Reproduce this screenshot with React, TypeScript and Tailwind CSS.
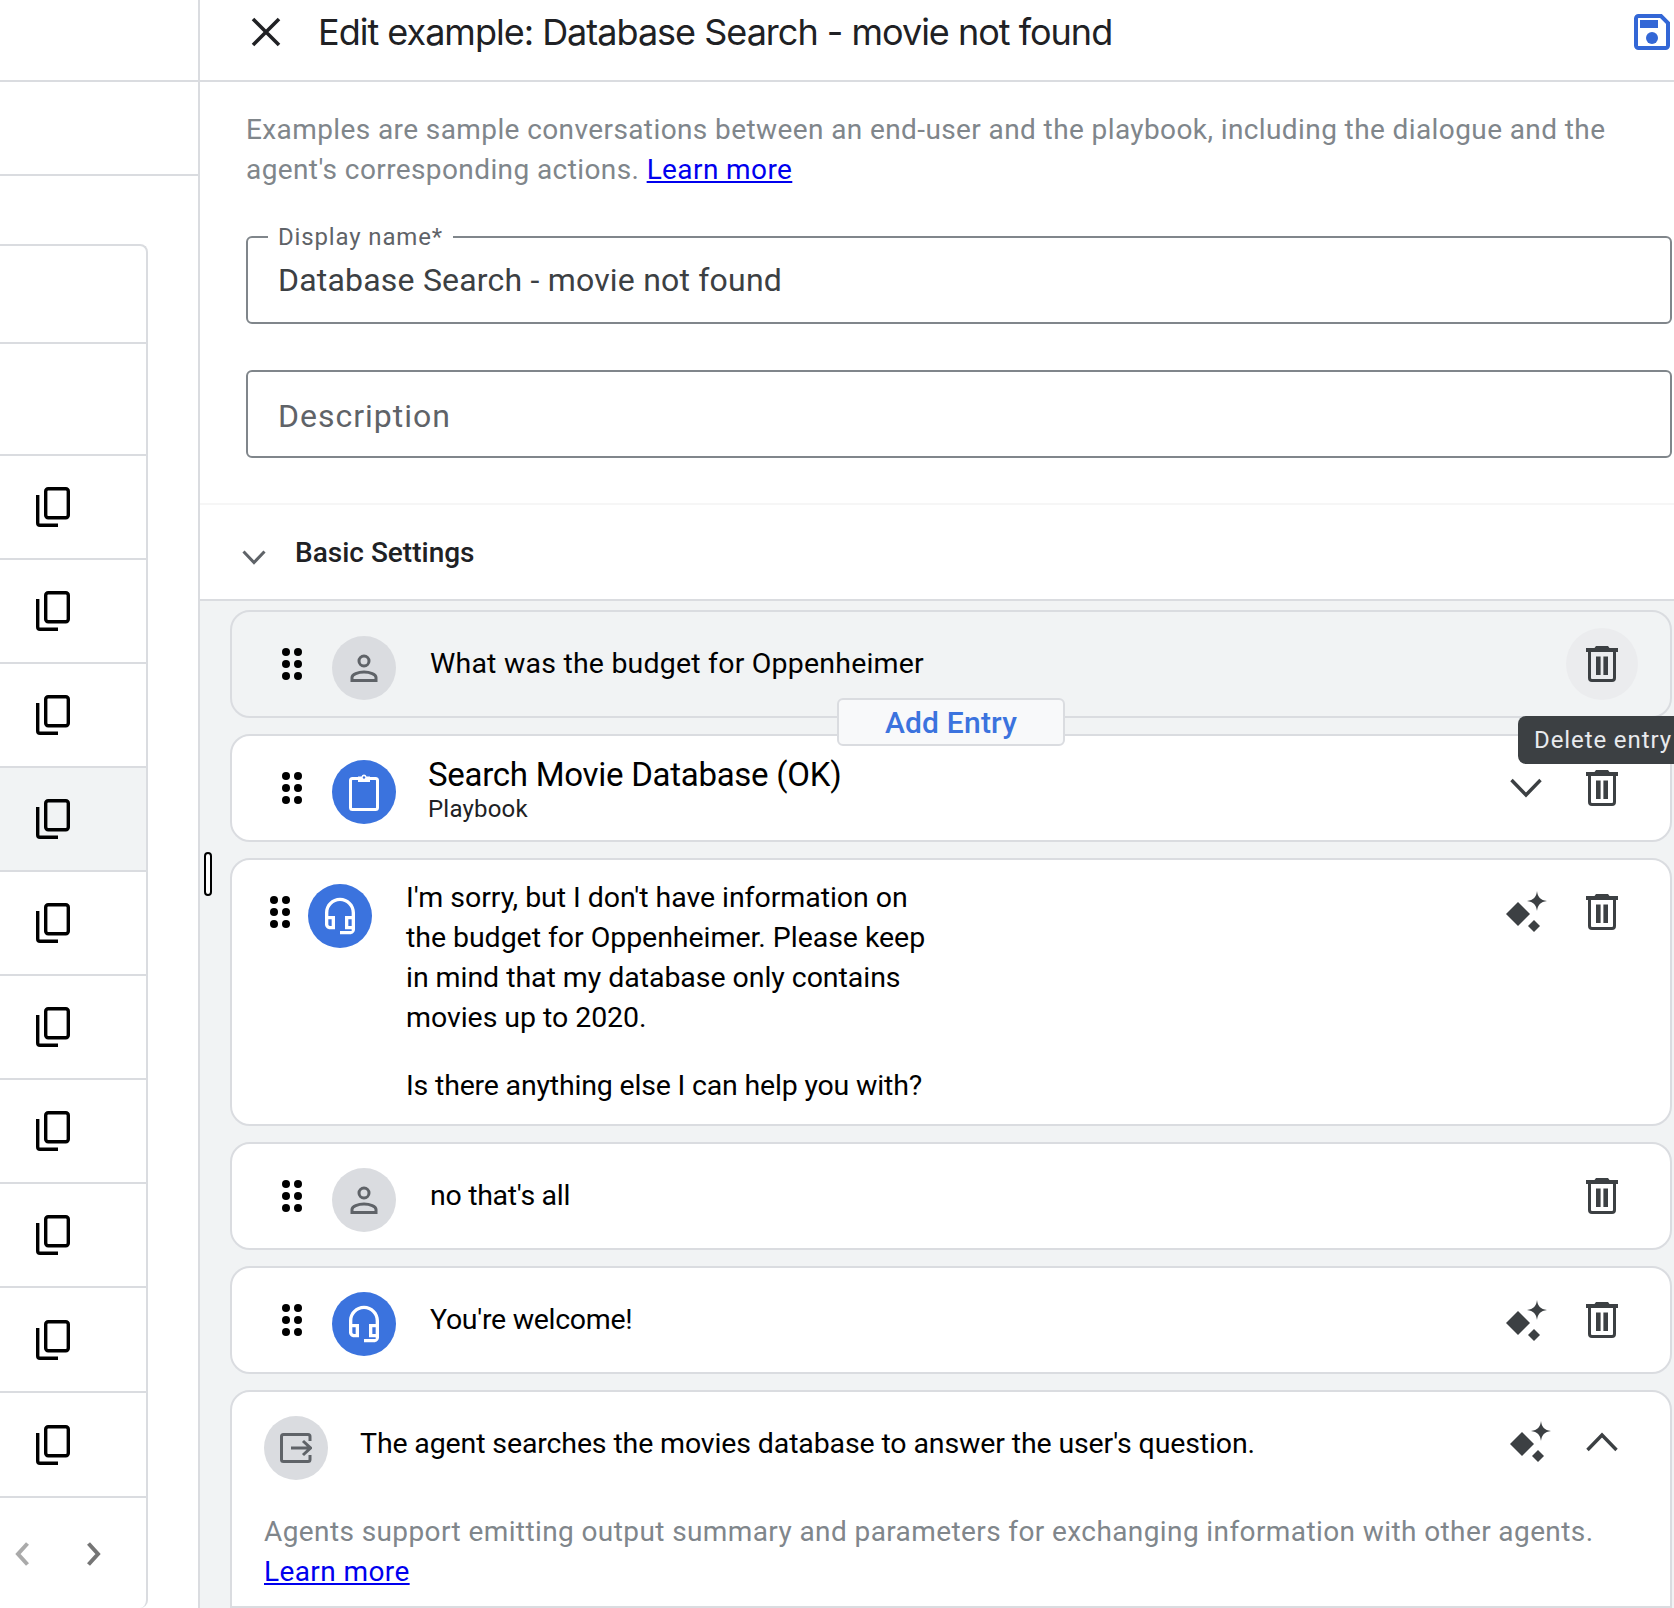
import type { ReactNode } from 'react';

const sidebarRows = [
  { height: 'h-[98px]', icon: false, active: false },
  { height: 'h-[112px]', icon: false, active: false },
  { height: 'h-[104px]', icon: true, active: false },
  { height: 'h-[104px]', icon: true, active: false },
  { height: 'h-[104px]', icon: true, active: false },
  { height: 'h-[104px]', icon: true, active: true },
  { height: 'h-[104px]', icon: true, active: false },
  { height: 'h-[104px]', icon: true, active: false },
  { height: 'h-[104px]', icon: true, active: false },
  { height: 'h-[104px]', icon: true, active: false },
  { height: 'h-[105px]', icon: true, active: false },
  { height: 'h-[105px]', icon: true, active: false },
];

/* icons */
const CopyIcon = () => (
  <svg width="34" height="40" viewBox="0 0 34 40" fill="none" stroke="#000" strokeWidth="3.4">
    <rect x="9.7" y="1.7" width="22.6" height="29" rx="2.5" />
    <path d="M1.7 8v28c0 1.3.9 2.3 2.3 2.3h18" />
  </svg>
);

const TrashIcon = () => (
  <svg width="32" height="36" viewBox="0 0 32 36" className="shrink-0">
    <path d="M10 0h12l1.5 2H32v4H0V2h8.5z" fill="#3c4043" />
    <path d="M3.5 5v27c0 1.4 1.1 2.5 2.5 2.5h20c1.4 0 2.5-1.1 2.5-2.5V5" fill="none" stroke="#3c4043" strokeWidth="3" />
    <rect x="10" y="10.5" width="4.6" height="18.5" fill="#3c4043" />
    <rect x="17.4" y="10.5" width="4.6" height="18.5" fill="#3c4043" />
  </svg>
);

const SparkleIcon = () => (
  <svg width="41" height="41" viewBox="0 0 41 41" className="shrink-0" fill="#3c4043">
    <path d="M12 11l12 12-12 12L0 23z" />
    <path d="M31 0c.6 6 3.6 9.2 10 10-6.4.8-9.4 4-10 10-.6-6-3.6-9.2-10-10 6.4-.8 9.4-4 10-10z" />
    <path d="M28 29l6 6-6 6-6-6z" />
  </svg>
);

const Chevron = ({ up = false }: { up?: boolean }) => (
  <svg width="32" height="20" viewBox="0 0 32 20" fill="none" stroke="#3c4043" strokeWidth="3.4" className="shrink-0">
    <path d={up ? 'M1.5 18L16 3l14.5 15' : 'M1.5 2L16 17 30.5 2'} />
  </svg>
);

const Grip = () => (
  <svg width="20" height="32" viewBox="0 0 20 32" fill="#000" className="shrink-0">
    {[4, 16, 28].map((cy) => (
      <g key={cy}>
        <circle cx="4" cy={cy} r="4" />
        <circle cx="16" cy={cy} r="4" />
      </g>
    ))}
  </svg>
);

const PersonIcon = () => (
  <svg width="28" height="28" viewBox="0 0 28 28" fill="none" stroke="#5f6368" strokeWidth="3">
    <circle cx="14" cy="7" r="5" />
    <path d="M2 26.5v-3c0-3 6-5.500 12-5.500s12 2.500 12 5.500v3z" />
  </svg>
);

const HeadsetIcon = () => (
  <svg width="40" height="40" viewBox="0 0 24 24" fill="#fff">
    <path d="M19 14v4h-2v-4h2M7 14v4H6c-.55 0-1-.45-1-1v-3h2m5-13c-4.970 0-9 4.030-9 9v7c0 1.660 1.340 3 3 3h3v-8H5v-2c0-3.870 3.130-7 7-7s7 3.130 7 7v2h-4v8h4v1h-7v2h6c1.660 0 3-1.340 3-3V10c0-4.970-4.030-9-9-9z" />
  </svg>
);

const ClipboardIcon = () => (
  <svg width="30" height="38" viewBox="0 0 30 38" fill="none">
    <rect x="1.500" y="5.500" width="27" height="31" rx="2" stroke="#fff" strokeWidth="3" />
    <path d="M9 3.500h3.500a2.600 2.600 0 0 1 5 0H21v5.500H9z" fill="#fff" />
    <circle cx="15" cy="4.500" r="1.200" fill="#3b73de" />
  </svg>
);

const ExportIcon = () => (
  <svg width="32" height="30" viewBox="0 0 32 30" fill="none" stroke="#5f6368" strokeWidth="3">
    <path d="M30 8V3.500c0-1.100-.9-2-2-2H3.500c-1.100 0-2 .9-2 2v23c0 1.100.9 2 2 2H28c1.100 0 2-.9 2-2V22" />
    <path d="M11 15h19M23 8l7.500 7-7.500 7" />
  </svg>
);

const SaveIcon = () => (
  <svg width="36" height="36" viewBox="0 0 36 36" fill="none">
    <path d="M2 4.500C2 3.100 3.100 2 4.500 2H27l7 7v22.500c0 1.400-1.100 2.500-2.500 2.500h-27C3.100 34 2 32.900 2 31.500z" stroke="#3367d6" strokeWidth="4" />
    <rect x="6" y="6" width="18" height="8" fill="#3367d6" />
    <circle cx="18" cy="24" r="6" fill="#3367d6" />
  </svg>
);

const Avatar = ({ color, children }: { color: 'gray' | 'blue'; children: ReactNode }) => (
  <div
    className={`flex h-16 w-16 shrink-0 items-center justify-center rounded-full ${
      color === 'gray' ? 'bg-[#dadce0]' : 'bg-[#3b73de]'
    }`}
  >
    {children}
  </div>
);

const Card = ({ className = '', children }: { className?: string; children: ReactNode }) => (
  <div className={`rounded-[20px] border-2 border-[#dadce0] ${className}`}>{children}</div>
);

/* single line entry: grip, avatar, text, actions */
const EntryRow = ({
  avatar,
  text,
  actions,
  className = 'bg-white',
}: {
  avatar: ReactNode;
  text: ReactNode;
  actions: ReactNode;
  className?: string;
}) => (
  <Card className={`flex h-[108px] items-center pl-[50px] pr-[52px] ${className}`}>
    <Grip />
    <div className="ml-[30px] mt-2">{avatar}</div>
    <div className="ml-[34px] flex-1">{text}</div>
    {actions}
  </Card>
);

const EntryText = ({ className = 'tracking-[-0.3px]', children }: { className?: string; children: ReactNode }) => (
  <span className={`text-[28.500px] text-black ${className}`}>{children}</span>
);

const Sidebar = () => (
  <aside className="flex h-full w-[200px] shrink-0 flex-col border-r-2 border-[#dadce0]">
    <div className="h-[82px] shrink-0 border-b-2 border-[#dadce0]" />
    <div className="h-[94px] shrink-0 border-b-2 border-[#dadce0]" />
    <div className="mt-[68px] flex w-[148px] flex-1 flex-col rounded-r-lg border-r-2 border-t-2 border-[#dadce0]">
      {sidebarRows.map((row, i) => (
        <div
          key={i}
          className={`flex shrink-0 items-center border-b-2 border-[#dadce0] pl-[36px] ${row.height} ${
            row.active ? 'bg-[#f1f3f4]' : ''
          }`}
        >
          {row.icon && <CopyIcon />}
        </div>
      ))}
      <div className="flex flex-1 items-start gap-[58px] pl-[15px] pt-[44px]">
        <svg width="14" height="24" viewBox="0 0 14 24" fill="none" stroke="#aaaaaa" strokeWidth="4">
          <path d="M12.500 1.500L3 12l9.500 10.500" />
        </svg>
        <svg width="14" height="24" viewBox="0 0 14 24" fill="none" stroke="#757575" strokeWidth="4">
          <path d="M1.500 1.500L11 12 1.500 22.500" />
        </svg>
      </div>
    </div>
  </aside>
);

const Field = ({ label, value, placeholder }: { label?: string; value?: string; placeholder?: string }) => (
  <div className="relative flex h-[88px] items-center rounded-[6px] border-2 border-[#80868b] pl-[30px]">
    {label && (
      <span className="absolute -top-[15px] left-[20px] bg-white px-[10px] text-[24px] leading-[28px] tracking-[0.85px] text-[#5f6368]">
        {label}
      </span>
    )}
    {value ? (
      <span className="text-[32px] tracking-[0.2px] text-[#3c4043]">{value}</span>
    ) : (
      <span className="mt-[3px] text-[32px] tracking-[1px] text-[#5f6368]">{placeholder}</span>
    )}
  </div>
);

export default function App() {
  return (
    <div className="relative flex h-[1608px] w-[1674px] overflow-hidden bg-white font-['Roboto',sans-serif]">
      <Sidebar />

      <main className="flex h-full min-w-0 flex-1 flex-col">
        <header className="flex h-[82px] shrink-0 items-center border-b-2 border-[#dadce0] pb-[17px] pl-[51px] pr-[4px]">
          <svg width="30" height="30" viewBox="0 0 30 30" stroke="#202124" strokeWidth="3.600">
            <path d="M2 2l26 26M28 2L2 28" />
          </svg>
          <h1 className="ml-[37px] flex-1 font-['Inter',sans-serif] text-[36px] tracking-[-1px] text-[#202124]">
            Edit example: Database Search - movie not found
          </h1>
          <SaveIcon />
        </header>

        <div className="flex shrink-0 flex-col pl-[46px] pr-[2px] pt-[28px]">
          <p className="text-[28px] leading-[40px] tracking-[0.4px] text-[#80868b]">
            Examples are sample conversations between an end-user and the playbook, including the dialogue and the
            <br />
            agent's corresponding actions.{' '}
            <a className="text-[#0000ee] underline">Learn more</a>
          </p>
          <div className="mt-[46px] flex flex-col gap-[46px]">
            <Field label="Display name*" value="Database Search - movie not found" />
            <Field placeholder="Description" />
          </div>
        </div>

        <section className="mt-[45px] flex h-[98px] shrink-0 items-center border-b-2 border-t-2 border-b-[#dadce0] border-t-[#f6f6f6] pl-[42px] pt-[2px]">
          <svg width="24" height="15" viewBox="0 0 24 15" fill="none" stroke="#5f6368" strokeWidth="3" className="mt-[8px]">
            <path d="M1.500 1.500L12 12.500l10.500-11" />
          </svg>
          <span className="ml-[29px] text-[28px] font-medium text-[#202124]">Basic Settings</span>
        </section>

        <div className="flex flex-1 flex-col gap-[16px] bg-[#f1f3f4] pl-[30px] pr-[2px] pt-[9px]">
          <EntryRow
            className="bg-[#f1f3f4]"
            avatar={
              <Avatar color="gray">
                <PersonIcon />
              </Avatar>
            }
            text={<EntryText className="tracking-[0.2px]">What was the budget for Oppenheimer</EntryText>}
            actions={
              <div className="-mx-5 flex h-[72px] w-[72px] shrink-0 items-center justify-center rounded-full bg-[#ebecee]">
                <TrashIcon />
              </div>
            }
          />

          <EntryRow
            avatar={
              <Avatar color="blue">
                <ClipboardIcon />
              </Avatar>
            }
            text={
              <div className="-ml-[2px] mt-[1px] flex flex-col">
                <span className="text-[33px] leading-[40px] tracking-[-0.27px] text-black">Search Movie Database (OK)</span>
                <span className="text-[24px] leading-[28px] tracking-[0.2px] text-[#202124]">Playbook</span>
              </div>
            }
            actions={
              <div className="flex items-center gap-[44px]">
                <Chevron />
                <TrashIcon />
              </div>
            }
          />

          <Card className="flex h-[268px] items-start bg-white pl-[38px] pr-[52px]">
            <div className="mt-[36px]">
              <Grip />
            </div>
            <div className="ml-[18px] mt-[24px]">
              <Avatar color="blue">
                <HeadsetIcon />
              </Avatar>
            </div>
            <div className="ml-[34px] mt-[18px] flex-1 text-[28.500px] leading-[40px] text-black">
              <p className="w-[530px] tracking-[-0.05px]">
                I'm sorry, but I don't have information on the budget for Oppenheimer. Please keep in mind that my
                database only contains movies up to 2020.
              </p>
              <p className="mt-[28px] tracking-[-0.18px]">Is there anything else I can help you with?</p>
            </div>
            <div className="mt-[31px] flex items-start gap-[39px]">
              <SparkleIcon />
              <div className="mt-[3px]">
                <TrashIcon />
              </div>
            </div>
          </Card>

          <EntryRow
            avatar={
              <Avatar color="gray">
                <PersonIcon />
              </Avatar>
            }
            text={<EntryText>no that's all</EntryText>}
            actions={<TrashIcon />}
          />

          <EntryRow
            avatar={
              <Avatar color="blue">
                <HeadsetIcon />
              </Avatar>
            }
            text={<EntryText>You're welcome!</EntryText>}
            actions={
              <div className="flex items-center gap-[39px]">
                <SparkleIcon />
                <TrashIcon />
              </div>
            }
          />

          <Card className="flex-1 rounded-b-none bg-white pl-[32px] pr-[52px] pt-[24px]">
            <div className="flex items-start">
              <Avatar color="gray">
                <ExportIcon />
              </Avatar>
              <div className="ml-[32px] mt-[7px] flex-1">
                <EntryText className="tracking-[-0.13px]">
                  The agent searches the movies database to answer the user's question.
                </EntryText>
              </div>
              <div className="mt-[5px] flex items-center gap-[35px]">
                <SparkleIcon />
                <Chevron up />
              </div>
            </div>
            <p className="mt-[32px] text-[28px] leading-[40px] tracking-[0.4px] text-[#80868b]">
              Agents support emitting output summary and parameters for exchanging information with other agents.
              <br />
              <a className="text-[#0000ee] underline">Learn more</a>
            </p>
          </Card>
        </div>
      </main>

      {/* floating bits */}
      <button className="absolute left-[837px] top-[698px] h-[48px] w-[228px] rounded-[6px] border-2 border-[#dadce0] bg-[#f8f9fa] text-[30px] font-medium tracking-[0.2px] text-[#3b73de]">
        Add Entry
      </button>
      <div className="absolute left-[1518px] top-[716px] flex h-[48px] w-[170px] items-center rounded-l-[8px] bg-[#3c4043] pl-[16px] text-[24px] tracking-[0.9px] whitespace-nowrap text-[#e8eaed]">
        Delete entry
      </div>
      <div className="absolute left-[204px] top-[852px] h-[44px] w-[8px] rounded-full border-2 border-black bg-white" />
    </div>
  );
}
